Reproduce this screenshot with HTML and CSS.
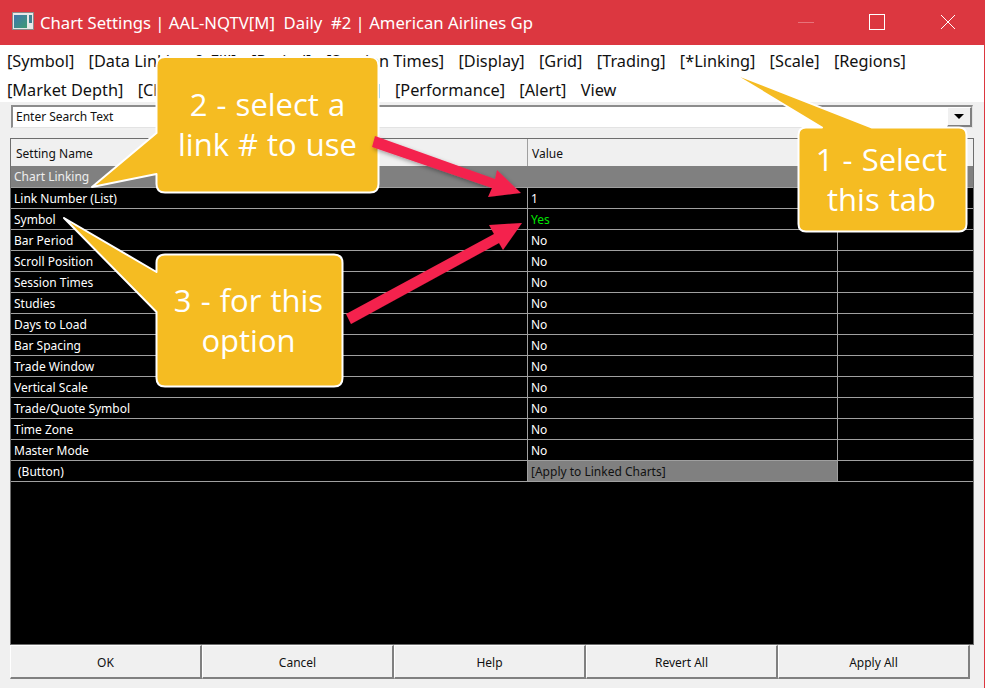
FILE: index.html
```html
<!DOCTYPE html>
<html lang="en">
<head>
<meta charset="utf-8">
<title>Chart Settings</title>
<link rel="stylesheet" href="styles.css">
</head>
<body>
<div class="window">
  <header class="titlebar">
    <svg class="app-icon" width="22" height="18" viewBox="0 0 22 18">
      <defs><linearGradient id="g" x1="0" y1="0" x2="1" y2="1"><stop offset="0" stop-color="#3f76b0"/><stop offset="1" stop-color="#3f9a72"/></linearGradient></defs>
      <rect x="0.5" y="0.5" width="21" height="17" fill="#e8e8e8" stroke="#8a8a8a"/>
      <rect x="2" y="3" width="13" height="13" fill="url(#g)"/>
      <rect x="17" y="3" width="3" height="8" fill="#3f7f8f"/>
    </svg>
    <div class="title">Chart Settings | AAL-NQTV[M]  Daily  #2 | American Airlines Gp</div>
    <div class="controls">
      <span class="ctl"><svg width="16" height="16" viewBox="0 0 16 16"><path d="M0 8.5h16" stroke="#e8737a"/></svg></span>
      <span class="ctl"><svg width="16" height="16" viewBox="0 0 16 16"><rect x="0.5" y="0.5" width="15" height="15" fill="none" stroke="#fff"/></svg></span>
      <span class="ctl"><svg width="16" height="16" viewBox="0 0 16 16"><path d="M1 1l14 14M15 1L1 15" stroke="#fff" fill="none"/></svg></span>
    </div>
  </header>
  <nav class="menu">
    <div class="menu-row">
      <span>[Symbol]</span><span>[Data Linking &amp; Fill]</span><span>[Period]</span><span>[Session Times]</span><span>[Display]</span><span>[Grid]</span><span>[Trading]</span><span>[*Linking]</span><span>[Scale]</span><span>[Regions]</span>
    </div>
    <div class="menu-row">
      <span>[Market Depth]</span><span>[Chart Designs]</span><span>[Trade Orders]</span><span>[Performance]</span><span>[Alert]</span><span>View</span>
    </div>
  </nav>
  <main class="panel">
    <div class="search">
      <span class="search-text">Enter Search Text</span>
      <span class="drop"><i class="tri"></i></span>
    </div>
    <section class="table">
      <div class="row head"><span class="c1">Setting Name</span><span class="c2">Value</span></div>
      <div class="row group"><span class="c1">Chart Linking</span><span class="c2"></span></div>
      <div class="row"><span class="c1">Link Number (List)</span><span class="c2">1</span><span class="c3"></span></div>
      <div class="row"><span class="c1">Symbol</span><span class="c2 yes">Yes</span><span class="c3"></span></div>
      <div class="row"><span class="c1">Bar Period</span><span class="c2">No</span><span class="c3"></span></div>
      <div class="row"><span class="c1">Scroll Position</span><span class="c2">No</span><span class="c3"></span></div>
      <div class="row"><span class="c1">Session Times</span><span class="c2">No</span><span class="c3"></span></div>
      <div class="row"><span class="c1">Studies</span><span class="c2">No</span><span class="c3"></span></div>
      <div class="row"><span class="c1">Days to Load</span><span class="c2">No</span><span class="c3"></span></div>
      <div class="row"><span class="c1">Bar Spacing</span><span class="c2">No</span><span class="c3"></span></div>
      <div class="row"><span class="c1">Trade Window</span><span class="c2">No</span><span class="c3"></span></div>
      <div class="row"><span class="c1">Vertical Scale</span><span class="c2">No</span><span class="c3"></span></div>
      <div class="row"><span class="c1">Trade/Quote Symbol</span><span class="c2">No</span><span class="c3"></span></div>
      <div class="row"><span class="c1">Time Zone</span><span class="c2">No</span><span class="c3"></span></div>
      <div class="row"><span class="c1">Master Mode</span><span class="c2">No</span><span class="c3"></span></div>
      <div class="row"><span class="c1 indent">(Button)</span><span class="c2 action">[Apply to Linked Charts]</span><span class="c3"></span></div>
    </section>
    <footer class="buttons">
      <span class="btn">OK</span><span class="btn">Cancel</span><span class="btn">Help</span><span class="btn">Revert All</span><span class="btn">Apply All</span>
    </footer>
  </main>

  <svg class="overlay" width="986" height="688" viewBox="0 0 986 688">
    <defs>
      <filter id="sh" x="-10%" y="-20%" width="120%" height="140%"><feDropShadow dx="1" dy="2" stdDeviation="2" flood-color="#000" flood-opacity="0.35"/></filter>
    </defs>
    <path class="bubble" d="M806 127.5H822L730 72L872 127.5H959Q966.500 127.5 966.500 135V224Q966.500 231.500 959 231.500H806Q798.500 231.500 798.500 224V135Q798.500 127.500 806 127.500Z"/>
    <path class="bubble" d="M165 57H370Q378.500 57 378.500 65.500V184Q378.500 192.500 370 192.500H165Q156.500 192.500 156.500 184V174L92 187L156.500 133V65.500Q156.500 57 165 57Z"/>
    <path class="bubble" d="M165 254.500H334Q342.500 254.500 342.500 263V378Q342.500 386.500 334 386.500H165Q156.500 386.500 156.500 378V312L64 218L156.500 272V263Q156.500 254.500 165 254.500Z"/>
    <polygon class="arrow" points="375,136 495,179 497,170 521,193 488,197 492,188 372,147"/>
    <polygon class="arrow" points="346,314 494,234 489,225 522,223 503,250 499,243 351,324"/>
  </svg>
  <div class="note n1">1 - Select<br>this tab</div>
  <div class="note n2">2 - select a<br>link # to use</div>
  <div class="note n3">3 - for this<br>option</div>
</div>
</body>
</html>
```
FILE: styles.css
```css
* { box-sizing: border-box; }
html, body { margin: 0; padding: 0; background: #fff; }
.window {
  position: relative;
  width: 985px;
  height: 688px;
  overflow: hidden;
  border-right: 1px solid #dc3740;
  display: flex;
  flex-direction: column;
  font-family: "Noto Sans", "Open Sans", sans-serif;
}
.titlebar {
  flex: none;
  height: 45px;
  background: #dc3740;
  color: #fff;
  display: flex;
  align-items: center;
  padding-left: 12px;
}
.app-icon { flex: none; margin-bottom: 3px; }
.title {
  margin-left: 6px;
  font-size: 16.7px;
  white-space: pre;
  line-height: 45px;
  margin-top: -1px;
}
.controls { margin-left: auto; display: flex; margin-bottom: 1px; padding-right: 1px; }
.ctl { width: 71px; display: flex; justify-content: center; }
.ctl svg { display: block; }
.menu {
  flex: none;
  height: 57px;
  background: #fff;
  padding: 2px 0 0 7px;
  color: #111;
  font-size: 16.3px;
}
.menu-row {
  height: 29px;
  line-height: 29px;
  display: flex;
  gap: 14.3px;
  white-space: nowrap;
}
.panel {
  flex: 1;
  background: #f0f0f0;
  display: flex;
  flex-direction: column;
  padding: 3px 0 0 10px;
  font-size: 12px;
}
.search {
  margin-left: 1px;
  width: 962px;
  height: 23px;
  background: #fff;
  border: 1px solid #e3e3e3;
  border-top: 2px solid #8c8c8c;
  border-left: 2px solid #8c8c8c;
  display: flex;
  align-items: center;
  padding-left: 3px;
  color: #111;
}
.search-text { flex: 1; margin-top: -2px; }
.drop {
  width: 25px;
  height: 20px;
  background: #f0f0f0;
  border: 1px solid #fff;
  border-right: 2px solid #808080;
  border-bottom: 2px solid #808080;
  display: flex;
  align-items: center;
  justify-content: center;
}
.tri {
  width: 0;
  height: 0;
  border-left: 5px solid transparent;
  border-right: 5px solid transparent;
  border-top: 5px solid #000;
}
.table {
  margin-top: 10px;
  width: 964px;
  height: 507px;
  background: #000;
  border: 1px solid #6e6e6e;
  flex: none;
  display: flex;
  flex-direction: column;
  color: #fff;
}
.row {
  flex: none;
  height: 21px;
  display: flex;
  border-bottom: 1px solid #a0a0a0;
  line-height: 21px;
}
.row span { display: block; white-space: pre; }
.c1 { width: 516px; padding-left: 3px; }
.c2 { width: 310px; padding-left: 3px; border-left: 1px solid #a0a0a0; }
.c3 { flex: 1; border-left: 1px solid #a0a0a0; }
.indent { padding-left: 7px; }
.head {
  height: 27px;
  background: #f0f0f0;
  color: #111;
  line-height: 29px;
  border-bottom: 0;
}
.head .c1 { padding-left: 5px; }
.head .c2 { padding-left: 4px; flex: 1; }
.group { height: 22px; background: #808080; color: #eee; }
.group .c2 { border-left: 0; flex: 1; }
.yes { color: #00e600; }
.action { background: #808080; color: #111; }
.buttons { display: flex; width: 960px; height: 34px; flex: none; }
.btn {
  width: 192px;
  height: 34px;
  background: #f0f0f0;
  border: 1px solid #fff;
  border-right: 2px solid #808080;
  border-bottom: 2px solid #808080;
  color: #111;
  text-align: center;
  line-height: 33px;
}
.overlay { position: absolute; left: 0; top: 0; pointer-events: none; }
.bubble { fill: #f5bc22; stroke: #fff; stroke-width: 2; stroke-linejoin: round; }
.arrow { fill: #f4244e; filter: url(#sh); }
.note {
  position: absolute;
  color: #fff;
  font-family: "Open Sans", "Noto Sans", sans-serif;
  font-size: 31px;
  word-spacing: 1px;
  line-height: 40px;
  text-align: center;
  white-space: nowrap;
}
.n1 { left: 798px; top: 139px; width: 167px; }
.n2 { left: 156px; top: 84px; width: 223px; }
.n3 { left: 155px; top: 280px; width: 187px; }
```
